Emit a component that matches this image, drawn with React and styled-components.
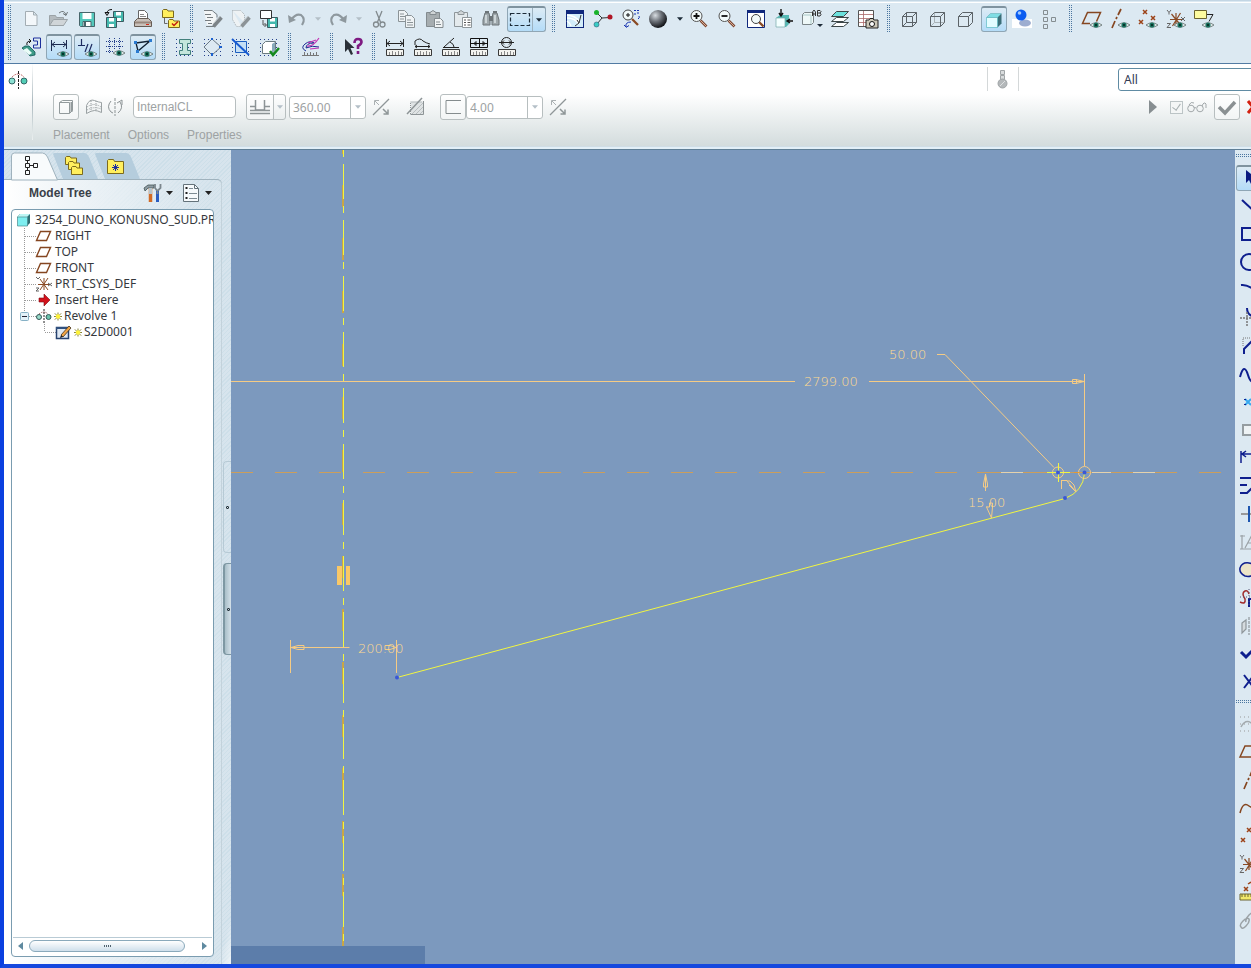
import React from 'react'
import styled, { createGlobalStyle, css } from 'styled-components'

const GlobalStyle = createGlobalStyle`
  *, *::before, *::after {
    box-sizing: border-box;
  }

  body {
    margin: 0;
    overflow: hidden;
    background: #dce9f2;
    font-family: "Liberation Sans", Arial, sans-serif;
    font-size: 12px;
    color: #222;
  }

  button, input, select {
    font: inherit;
    color: inherit;
    margin: 0;
  }
`

const treeFont = '"Noto Sans", "DejaVu Sans Condensed", sans-serif'

const Window = styled.div`
  height: 100vh;
  display: flex;
  flex-direction: column;
  overflow: hidden;
  border-left: 4px solid #0a3fe0;
  border-bottom: 4px solid #1548de;
`

const Toolbars = styled.header`
  flex: none;
  padding: 2px 0;
  border-bottom: 1px solid #527ba3;
  background: linear-gradient(#c3d6e4 0 1px, #dce9f2 1px);
`

const gripDots = css`
  background-image: conic-gradient(at 1px 1px, transparent 75%, #4b76a0 0);
  background-size: 2px 2px;
  background-origin: content-box;
  background-clip: content-box;
`

const Grip = styled.div`
  flex: none;
  width: 14px;
  height: 28px;
  padding: 0 6px 0 5px;
  ${gripDots}

  &:first-child {
    width: 13px;
    padding: 0 6px 0 4px;
  }
`

const SideGrip = styled.div`
  flex: none;
  height: 14px;
  padding: 4px 0 7px 1px;
  ${gripDots}
`

const ToolbarLine = styled.div`
  height: 28px;
  display: flex;
  align-items: center;

  &:first-child {
    height: 31px;
    padding-top: 2px;
    border-top: 1px solid #ffffff;
  }
`

const pressed = css`
  border: 1px solid #8fa6b5;
  border-top: 2px solid #7f939f;
  border-radius: 3px;
  background: linear-gradient(#dcebf5, #b4dcf8);
`

const ToolButton = styled.button`
  flex: none;
  width: 26px;
  height: 26px;
  margin: 1px;
  padding: 0;
  display: flex;
  align-items: center;
  justify-content: center;
  border: 1px solid transparent;
  background: none;
  ${({ $active }) => $active && pressed}
`

const DropButton = styled.button`
  flex: none;
  width: 13px;
  height: 26px;
  padding: 0;
  display: flex;
  align-items: center;
  justify-content: center;
  border: 0;
  background: none;
  color: ${({ disabled }) => (disabled ? '#b4bfc7' : '#1d2b38')};
`

const SplitButton = styled.div`
  flex: none;
  height: 26px;
  margin: 0 1px 0 2px;
  display: flex;
  align-items: stretch;
  ${pressed}

  ${ToolButton} {
    width: 24px;
    height: 22px;
    margin: 0;
  }

  ${DropButton} {
    width: 13px;
    height: auto;
    border-left: 1px solid #9db2c0;
  }
`

const Icon = styled.svg`
  flex: none;
  display: block;
  width: ${({ $w }) => $w || 20}px;
  height: ${({ $h }) => $h || 20}px;
  overflow: visible;
`

const Dashboard = styled.section`
  flex: none;
  height: 86px;
  display: flex;
  border-bottom: 1px solid #5f7f96;
  background: linear-gradient(#ffffff 0, #ffffff 30px, #d3dcdd 82px, #bccbd3 82px, #e2eff7 83px);
  color: #9da2a3;
`

const FeatureMark = styled.div`
  flex: none;
  width: 29px;
  height: 76px;
  padding: 6px 0 0 4px;
  border-right: 1px solid;
  border-image: linear-gradient(#ffffff, #a9b7bd 50%, #eef2f2) 1;
`

const DashboardBody = styled.div`
  flex: 1;
  min-width: 0;
  padding-left: 20px;
`

const StatusLine = styled.div`
  height: 30px;
  padding-top: 3px;
  display: flex;
  justify-content: flex-end;
`

const StatusSlot = styled.div`
  width: 32px;
  height: 24px;
  margin-right: 99px;
  display: flex;
  align-items: center;
  justify-content: center;
  border: solid #d4d8d9;
  border-width: 0 1px;
`

const Filter = styled.select`
  appearance: none;
  width: 142px;
  height: 23px;
  margin: 1px -9px 0 0;
  padding: 0 5px;
  border: 1px solid #5f8ba3;
  border-radius: 3px;
  background: #ffffff;
  color: #333b55;
  font-family: ${treeFont};
`

const ControlLine = styled.div`
  height: 26px;
  display: flex;
  align-items: center;
`

const OptionButton = styled.button`
  flex: none;
  width: 26px;
  height: 26px;
  padding: 0;
  display: flex;
  align-items: center;
  justify-content: center;
  border: 1px solid #b7bebf;
  border-radius: 3px;
  background: rgba(255, 255, 255, 0.4);
`

const PlainButton = styled(OptionButton)`
  width: ${({ $w }) => $w || 21}px;
  border-color: transparent;
  background: none;
`

const AxisInput = styled.input`
  width: 103px;
  height: 22px;
  margin: 0 10px;
  padding: 0 3px;
  border: 1px solid #b7bebf;
  border-radius: 4px;
  background: #ffffff;
`

const Split = styled.div`
  height: 26px;
  margin-right: 3px;
  display: flex;
  border: 1px solid #b7bebf;
  border-radius: 3px;

  ${OptionButton} {
    height: 24px;
    border: 0;
  }

  ${DropButton} {
    width: 12px;
    height: 24px;
    border-left: 1px solid #b7bebf;
  }
`

const Combo = styled.div`
  width: 77px;
  height: 23px;
  margin-right: 4px;
  display: flex;
  border: 1px solid #b7bebf;
  border-radius: 3px;
  background: #ffffff;

  input {
    flex: 1;
    min-width: 0;
    padding: 0 3px;
    border: 0;
    background: none;
    font-family: ${treeFont};
  }

  ${DropButton} {
    width: 15px;
    height: 21px;
    border-left: 1px solid #b7bebf;
  }
`

const Spring = styled.div`
  flex: 1;
`

const PreviewCheck = styled.label`
  width: 44px;
  margin-left: 8px;
  display: flex;
  align-items: center;
  gap: 4px;

  input {
    appearance: none;
    width: 13px;
    height: 13px;
    border: 1px solid #bcc4c6;
    background: #f4f6f6;
  }

  input:checked::after {
    content: "";
    display: block;
    width: 5px;
    height: 8px;
    margin: 0 3px;
    border: solid #a6aeb0;
    border-width: 0 1px 1px 0;
    transform: rotate(35deg);
  }
`

const SlideUps = styled.nav`
  display: flex;
  gap: 18px;
  padding-top: 6px;

  button {
    height: 18px;
    padding: 0;
    border: 0;
    background: none;
  }
`

const Workspace = styled.main`
  flex: 1;
  min-height: 0;
  display: flex;
`

const Navigator = styled.aside`
  flex: none;
  width: 227px;
  display: flex;
  background:
    linear-gradient(to bottom right, rgba(255, 255, 255, 0) 97%, rgba(255, 255, 255, 0.6)),
    repeating-linear-gradient(135deg, #cddfe9 0 1px, #d7e4ed 1px 3px);
`

const NavigatorMain = styled.div`
  flex: 1;
  min-width: 0;
  padding-top: 2px;
  display: flex;
  flex-direction: column;
`

const Tabs = styled.div`
  height: 27px;
  padding-left: 7px;
  display: flex;
`

const Tab = styled.button`
  position: relative;
  width: 42px;
  height: 27px;
  padding: 0;
  border: 0;
  background: none;

  > svg {
    position: absolute;
    inset: 0;
  }

  &:first-child {
    z-index: 1;
  }
`

const Panel = styled.div`
  flex: 1;
  min-height: 0;
  padding: 0 7px 7px;
  display: flex;
  flex-direction: column;
  border-top: 1px solid #9fb2bd;
  border-radius: 0 5px 0 0;
  background: linear-gradient(to right, #ffffff 0, #f0f5f8 60px, rgba(222, 233, 240, 0.2) 200px);
  box-shadow: inset -1px 0 0 #c3d2db;
`

const PanelHeader = styled.div`
  flex: none;
  height: 29px;
  padding: 0 3px 4px 18px;
  display: flex;
  align-items: center;

  h2 {
    flex: 1;
    margin: 0;
    font-size: 12px;
    font-weight: bold;
    color: #3a4048;
  }
`

const HeaderMenu = styled.button`
  width: 39px;
  padding: 0;
  display: flex;
  align-items: center;
  justify-content: flex-end;
  gap: 3px;
  border: 0;
  background: none;
`

const TreeBox = styled.div`
  flex: 1;
  min-height: 0;
  width: 203px;
  display: flex;
  flex-direction: column;
  border: 1px solid #7a9cb0;
  border-radius: 4px;
  background: #ffffff;
`

const TreeList = styled.ul`
  flex: 1;
  margin: 0;
  padding: 2px 0 0 4px;
  overflow: hidden;
  list-style: none;
  font-family: ${treeFont};
  font-size: 12px;
  color: #35383d;
`

const TreeRow = styled.li`
  height: 16px;
  display: flex;
  align-items: center;
  gap: ${({ $fresh }) => ($fresh ? 2 : 3)}px;
  line-height: 16px;
  white-space: nowrap;
`

const TreeGlyphs = styled.span`
  flex: none;
  display: flex;
`

const ScrollLine = styled.div`
  flex: none;
  height: 19px;
  margin: 0 1px;
  padding: 0 5px 2px;
  display: flex;
  align-items: center;
  border-top: 1px solid #b9cbd5;
`

const ScrollThumb = styled.div`
  flex: none;
  width: 156px;
  height: 12px;
  margin: 0 17px 0 6px;
  display: flex;
  align-items: center;
  justify-content: center;
  gap: 1px;
  border: 1px solid #8aa9bb;
  border-radius: 6px;
  background: linear-gradient(#ffffff, #cfdfeb);

  i {
    width: 1px;
    height: 2px;
    background: #50626e;
  }
`

const Sashes = styled.div`
  flex: none;
  width: 9px;
  padding: 311px 0 0 1px;
  display: flex;
  flex-direction: column;
  gap: 10px;
`

const Sash = styled.button`
  height: 92px;
  padding: 0;
  display: flex;
  align-items: center;
  justify-content: center;
  border: solid ${({ $open }) => ($open ? '#7e98a3' : '#b7cad5')};
  border-width: 1px 0 1px ${({ $open }) => ($open ? 2 : 1)}px;
  border-radius: 4px 0 0 4px;
  background: ${({ $open }) => ($open ? 'linear-gradient(to right, #a9bfc9, #d3e0e8)' : 'none')};

  i {
    width: 3px;
    height: 3px;
    border: 1px solid #24323a;
    border-radius: 1px;
  }
`

const Viewport = styled.section`
  flex: 1;
  min-width: 0;
  display: flex;
  flex-direction: column;
  background: #7c99be;
`

const Drawing = styled.svg`
  flex: 1;
  display: block;
  width: 100%;
  min-height: 0;

  text {
    font-family: "DejaVu Sans Light", "DejaVu Sans", sans-serif;
    font-weight: 200;
    font-size: 13px;
    fill: #ffd98f;
  }
`

const MessageStrip = styled.div`
  flex: none;
  width: 194px;
  height: 18px;
  background: #5c7daa;
`

const SketchTools = styled.aside`
  flex: none;
  width: 16px;
  overflow: hidden;
  display: flex;
  flex-direction: column;
  background: #dce9f2;
`

/* ---- icons ---- */

const Arrow = ({ w = 7 }) => (
  <Icon viewBox="0 0 7 4" $w={w} $h={4}><path d="M0 0h7L3.5 4z" fill="currentColor" /></Icon>
)

const eye = (
  <g>
    <path d="M8 16q6-4.500 12 0q-6 4.500-12 0z" fill="#e8f0f0" stroke="#4d5c5a" strokeWidth=".7" />
    <circle cx="14" cy="16" r="2.600" fill="#1d7563" />
    <circle cx="14" cy="16" r="1.200" fill="#06352c" />
  </g>
)

const dots = (
  <path d="M1.5 2v17M5.5 2v17M9.5 2v17M13.5 2v17M17.5 2v17" stroke="#24408c" strokeDasharray="1 3" />
)

const ruler = (
  <g>
    <path d="M1.5 12.5h17v6h-17z" fill="#f4f4f0" stroke="#3a3a3a" />
    <path d="M4.5 15v3M7.5 14v4M10.5 15v3M13.5 14v4M16.5 15v3" stroke="#888" />
  </g>
)

const floppy = (
  <g>
    <path d="M2.5 3.5h15v14h-14l-1-1z" fill="#54c8bc" stroke="#47656a" />
    <path d="M5.5 4h9v6h-9z" fill="#fff" />
    <path d="M6 12.500h8v5h-8z" fill="#fff" stroke="#47656a" />
    <path d="M7 13h2v4h-2z" fill="#47656a" />
  </g>
)

const miniFloppy = (x, y) => (
  <g transform={`translate(${x} ${y})`}>
    <path d="M.5.5h10v10h-10z" fill="#45b9ae" stroke="#3b5a60" />
    <path d="M3 1h5v3.500h-5zM3 7h5v3h-5z" fill="#fff" />
  </g>
)

const magnifier = (sign) => (
  <g fill="none">
    <path d="M10.500 11.500l6 6" stroke="#7d4a34" strokeWidth="2.600" />
    <path d="M10.500 11.500l6 6" stroke="#d8ac96" />
    <circle cx="6.500" cy="7" r="5.500" fill="#f2fafa" stroke="#555" />
    <path d={sign} stroke="#111" strokeWidth="1.800" />
  </g>
)

const wire = 'M2.5 7.5h10v10h-10zM6.500 3.500h10v10M2.5 7.5l4-4M12.5 7.5l4-4M12.5 17.5l4-4'

const cross = (x, y, s = 2) => `M${x - s} ${y - s}l${2 * s} ${2 * s}M${x + s} ${y - s}l${-2 * s} ${2 * s}`

const csys = (
  <g fill="none">
    <path d="M4 10.500h12M5.500 5l9 11M14.500 4l-8 13M10 4v12" stroke="#8a4a24" strokeWidth="1.200" />
    <path d="M1 1l2 2.500l2-2.500M3 3.500v2M1 14.500h3.500l-3.500 4h4M15 8l4 4M19 8l-4 4" stroke="#666" strokeWidth="1" />
  </g>
)

const folder = (x, y) => (
  <path transform={`translate(${x} ${y})`} d="M.5 8.500v-7l1-1h3.500l1 1.500h5.500v6.500z" fill="#ffef5e" stroke="#7c6a1c" />
)

const icons = {
  new: <path d="M4.5 2.500h8l3.500 3.500v10.500h-11.500zM12.500 2.500v3.500h3.500" fill="#f3f7fa" stroke="#a3adb3" />,
  open: (
    <g>
      <path d="M.5 16.500v-10h6l1 2h7v8z" fill="#b4bbbf" stroke="#9ba3a7" />
      <path d="M.5 16.500l4-6h14l-4 6z" fill="#d0d5d8" stroke="#9ba3a7" />
      <path d="M10 4q5-4 7 2M14 4.500l3 2l1.500-3.500" fill="none" stroke="#6d7578" />
    </g>
  ),
  save: floppy,
  saveCopy: (
    <g>
      {miniFloppy(8, 2)}
      {miniFloppy(1, 8)}
      <path d="M7 .5q-5 0-5 4M0 3.500h4l-2 3z" stroke="#111" fill="none" />
    </g>
  ),
  print: (
    <g>
      <path d="M5.500 10v-8.500h6l3 3v6" fill="#fff" stroke="#666" />
      <path d="M7 5.500h4M7 7.500h6M7 9.500h6" stroke="#888" />
      <path d="M1.500 12.500l3-3h11l3 3v5h-17z" fill="#c9c1ba" stroke="#655b53" />
      <path d="M2 12.500h16v2h-16z" fill="#98877c" />
      <path d="M13 15.500h3" stroke="#d62c1a" />
    </g>
  ),
  confirm: (
    <g>
      {folder(1, 0)}
      {folder(7, 10)}
      <path d="M3.500 9v5.500h3" fill="none" stroke="#666" />
      <path d="M11 14.500l2 2l4-4" fill="none" stroke="#c21d10" strokeWidth="1.500" />
    </g>
  ),
  regen: (
    <g>
      <path d="M1 1.500h8l5 4v3M3 17.500h8" fill="none" stroke="#777e82" />
      <path d="M1 2h8l4 4v10h-9z" fill="#f3f6f7" />
      <path d="M2 5.500h6M4 8.500h6M2 11.500h6M5 14.500h4" stroke="#777e82" />
      <path d="M10.500 17.500l8-9" stroke="#7d8488" strokeWidth="3.500" />
      <path d="M10 15l7-8" stroke="#b9c0c3" />
    </g>
  ),
  regenAuto: (
    <g>
      <path d="M1.500 1.500h8l4 4v8M1.500 1.500v9l4 7h5" fill="#eef2f4" stroke="#a5adb1" strokeDasharray="1 1" />
      <path d="M10.500 17.500l8-9" stroke="#8c9397" strokeWidth="3.500" />
      <path d="M10 15l7-8" stroke="#c5cbce" />
    </g>
  ),
  saveWindow: (
    <g>
      {miniFloppy(8, 8)}
      <path d="M1.500 1.500h11v8h-11z" fill="#fff" stroke="#333" />
      <path d="M4 11v5h3M5.500 14l2 2l-2 2" fill="none" stroke="#555" />
    </g>
  ),
  undo: (
    <g>
      <path d="M4 11q5-7 10-5q5 4 1 10" fill="none" stroke="#8e989e" strokeWidth="2.200" />
      <path d="M1 6l1 8l7-3z" fill="#8e989e" />
    </g>
  ),
  redo: (
    <g>
      <path d="M16 11q-5-7-10-5q-5 4-1 10" fill="none" stroke="#8e989e" strokeWidth="2.200" />
      <path d="M19 6l-1 8l-7-3z" fill="#8e989e" />
    </g>
  ),
  cut: (
    <g fill="none" stroke="#828a8e" strokeWidth="1.300">
      <path d="M7 2l4.500 11M13 2l-4.500 11" />
      <circle cx="7" cy="15.500" r="2.500" />
      <circle cx="13.500" cy="15.500" r="2.500" />
    </g>
  ),
  copy: (
    <g fill="#eff3f5" stroke="#8b9397">
      <path d="M1.500 1.500h6l3 3v8h-9zM3 5h4M3 7.500h5M3 10h4" />
      <path d="M8.500 6.500h6l3 3v9h-9zM10 11h4M10 13.500h6M10 16h6" />
    </g>
  ),
  paste: (
    <g>
      <path d="M1.500 3.500h13v14h-13z" fill="#a6adb0" stroke="#838b8f" />
      <path d="M5 5.500v-2l3-2l3 2v2z" fill="#d0d5d7" stroke="#838b8f" />
      <path d="M9.500 9.500h6l2.500 2.500v6.500h-8.500zM11 13h4M11 15.500h5" fill="#f1f4f5" stroke="#838b8f" />
    </g>
  ),
  pasteSpecial: (
    <g stroke="#8e969a">
      <path d="M1.500 3.500h13v14h-13z" fill="#e4eaed" />
      <path d="M5 5.500v-2l3-2l3 2v2z" fill="#d0d5d7" />
      <path d="M9.500 8.500h9v10h-9z" fill="#fff" />
      <path d="M11 11h2M14.500 11h3M11 13.500h2M14.500 13.500h3M11 16h2M14.500 16h3" stroke="#555" />
    </g>
  ),
  find: (
    <g>
      <path d="M4 4h4l1 5v7h-7v-5zM12 4h4l2 7v5h-7v-7z" fill="#9fa8ac" stroke="#6c7478" />
      <path d="M4 3h4M12 3h4" stroke="#6c7478" strokeWidth="2" />
      <path d="M8 7h4v5h-4z" fill="#6c7478" />
      <path d="M5 6v8M14 6v8" stroke="#dde3e6" strokeWidth="1.500" />
    </g>
  ),
  select: <path d="M.5 4.500h19v12h-19z" fill="none" stroke="#1c2b38" strokeWidth="1.200" strokeDasharray="4 2" />,
  repaint: (
    <g>
      <path d="M1 1h18v18h-18z" fill="#10287c" />
      <path d="M2 5h16v13h-16z" fill="#d3edfa" />
      <path d="M2 9q8 0 12 6M2 6q9 1 12 6M6 17q-1-3-4-5" stroke="#fff" strokeWidth="1.500" fill="none" />
      <path d="M10 17l4-3l2-8M14 14l-2-3" stroke="#333" fill="none" />
    </g>
  ),
  spin: (
    <g>
      <path d="M4 4l5 5l8-.5M9 9l-5 6" stroke="#333" fill="none" />
      <circle cx="3.500" cy="3.500" r="2.500" fill="#19b32a" />
      <circle cx="17" cy="8" r="2.500" fill="#b01626" />
      <circle cx="3.500" cy="15.500" r="2.500" fill="#3accc4" stroke="#246" strokeWidth=".5" />
    </g>
  ),
  orient: (
    <g fill="none">
      <circle cx="7" cy="6" r="5" fill="#f2fafa" stroke="#444" />
      <path d="M5 6h4M7 4v4" stroke="#111" />
      <path d="M11 10l6 6" stroke="#8a4a24" strokeWidth="2.300" />
      <path d="M13 1.500h2M16 1.500h2M13 5h2M16 4h2M10 13q-6 0-5 5l-2-2M5 18.500l3-2M17 10q2-1 1-3" stroke="#1733b0" />
    </g>
  ),
  shade: (
    <g>
      <radialGradient id="ball" cx="35%" cy="30%" r="70%">
        <stop offset="0" stopColor="#d8dde2" />
        <stop offset=".5" stopColor="#6b7077" />
        <stop offset="1" stopColor="#14161a" />
      </radialGradient>
      <circle cx="9" cy="10" r="9" fill="url(#ball)" />
    </g>
  ),
  zoomIn: magnifier('M3.500 7h6M6.500 4v6'),
  zoomOut: magnifier('M3.500 7h6'),
  refit: (
    <g>
      <path d="M1.500 1.500h17v17h-17z" fill="#fff" stroke="#10287c" />
      <path d="M1 1h18v3h-18z" fill="#10287c" />
      <path d="M13 13l4.500 4.500" stroke="#8a4a24" strokeWidth="2.300" />
      <circle cx="10" cy="10" r="4.500" fill="#f2fafa" stroke="#444" />
    </g>
  ),
  view: (
    <g>
      <path d="M2 9l4-3h9v9l-3 3h-10z" fill="#55b9b4" />
      <path d="M2 9h9v9h-9z" fill="#f3ffff" stroke="#7aa" strokeWidth=".7" />
      <path d="M7 0v6M5 4l2 3l2-3M19 12h-5M16 10l-3 2l3 2" fill="none" stroke="#111" strokeWidth="1.400" />
    </g>
  ),
  savedViews: (
    <g>
      <path d="M.5 5.500l2-2h9v10l-2 2h-9z" fill="#eef8f8" stroke="#7b8588" />
      <path d="M1 6h8v9" fill="none" stroke="#a9c8c8" />
      <path d="M10.500 7v-4l1.500-2l1.500 2v4M10.500 5h3M15.500 1.500h2.500l1 1l-1 1.500h-2.500M18 4l1 1.500l-1 1.500h-2.500v-5.500" fill="none" stroke="#333" />
      <path d="M15 15h6l-3 3z" fill="#1d2b38" />
    </g>
  ),
  layers: (
    <g stroke="#3c4648">
      <path d="M1.500 17.500l5-4h12l-5 4z" fill="#fff" />
      <path d="M1.500 12.500l5-4h12l-5 4z" fill="#fff" />
      <path d="M1.500 7.500l5-5h12l-5 5z" fill="#6be0dc" />
    </g>
  ),
  snapshot: (
    <g>
      <path d="M.5 1.500h15v16h-15z" fill="#fff" stroke="#555" />
      <path d="M1 5.500h14M1 9.500h14M1 13.500h14M5.500 2v15" stroke="#a66" strokeWidth=".8" />
      <path d="M8 11h3l1-1.500h3l1 1.500h4v8h-12z" fill="#cbc6b7" stroke="#222" />
      <circle cx="14" cy="15" r="2.500" fill="#fff" stroke="#111" />
    </g>
  ),
  wireframe: <path d={`${wire}M6.500 3.500v10h10M2.5 17.5l4-4`} fill="none" stroke="#5c6368" />,
  hiddenLine: (
    <g fill="none">
      <path d="M6.500 3.500v10h10M2.500 17.500l4-4" stroke="#a9b2b7" />
      <path d={wire} stroke="#5c6368" />
    </g>
  ),
  noHidden: (
    <path d="M2.500 7.500h10v10h-10zM2.500 7.500l4-4h10v10l-4 4M12.500 7.500l4-4" fill="none" stroke="#5c6368" />
  ),
  shaded: (
    <g>
      <path d="M2.500 7.500l4-4h11v10l-4 4z" fill="#3a6e78" />
      <path d="M2.500 7.500l4-4h11l-4 4z" fill="#7fdde4" />
      <path d="M2.500 7.500h11v10h-11z" fill="#e2fcff" stroke="#5dbac4" strokeWidth=".7" />
    </g>
  ),
  realism: (
    <g>
      <path d="M0 10h20v9h-20z" fill="#fff" />
      <ellipse cx="13" cy="14" rx="6" ry="3.500" fill="#9dadd0" />
      <circle cx="9" cy="6" r="5.500" fill="#0b5cf0" />
      <circle cx="7.500" cy="4" r="1.800" fill="#9dc6ff" />
    </g>
  ),
  modelTree: (
    <path d="M3.500 1.500h4v4h-4zM3.500 8.500h4v4h-4zM3.500 15.500h4v4h-4zM11.500 8.500h4v4h-4z" fill="none" stroke="#858d91" />
  ),
  planes: <g><path d="M8 14.500h-7.500l5-11h13l-4 9" fill="none" stroke="#854620" strokeWidth="1.500" />{eye}</g>,
  axes: <g><path d="M11 0l-3 6M7 8l-1 2M5 12l-3 7" fill="none" stroke="#854620" strokeWidth="1.700" />{eye}</g>,
  points: <g><path d={`${cross(7, 3)}${cross(15, 9)}${cross(3, 13)}`} stroke="#9c4218" strokeWidth="1.500" />{eye}</g>,
  csysShow: <g>{csys}{eye}</g>,
  notes: (
    <g>
      <path d="M.5 1.500h12v8h-12z" fill="#fdfca0" stroke="#6b6430" />
      <path d="M13 5.500h6l-4 7" fill="none" stroke="#222" />
      {eye}
    </g>
  ),
  sketchView: (
    <g fill="none">
      <path d="M12.500 3v-2h7v10h-7v-3h4v-4h-4z" stroke="#1c2f9c" />
      <path d="M6 8q-1-4 4-4M8 2l2 2l-2 2" stroke="#111" />
      <path d="M1 11l3-2h4l6 6v3l-5 1z" fill="#3f9c88" stroke="#155" strokeWidth=".8" />
      <path d="M2 13l4-2l5 5l-3 2z" fill="#eafcf8" />
    </g>
  ),
  dimShow: <g><path d="M2.5 2v11M17.5 2v9M3 6.500h14M6 4l-3 2.500l3 2.500M14 4l3 2.500l-3 2.500" fill="none" stroke="#1d2b50" />{eye}</g>,
  constraintShow: <g><path d="M1 7.500h7M4.500 1v6M11 6l-3 8M15 6l-3 8" fill="none" stroke="#1d2b60" strokeWidth="1.200" />{eye}</g>,
  gridShow: <g><path d="M4.500 1v16M9.500 1v12M14.500 1v12M1 4.500h18M1 9.500h18M1 14.500h8" fill="none" stroke="#24408c" strokeDasharray="1 1" />{eye}</g>,
  vertexShow: (
    <g>
      <path d="M3 5l14-2l-12 10z" fill="none" stroke="#123" strokeWidth="1.300" />
      <path d="M1 3h3v3h-3zM16 1h3v3h-3zM3 12h3v3h-3z" fill="#2a7ad0" />
      {eye}
    </g>
  ),
  section: <g>{dots}<path d="M4.500 2.500h11v4h-3v7h3v4h-11v-4h3v-7h-3z" fill="#c4e6dc" stroke="#43807c" /></g>,
  rotateSection: (
    <g>
      {dots}
      <path d="M9 2l9 8l-9 8l-8-8z" fill="#dce9f2" stroke="#6a7884" />
      <path d="M8 1h2v2h-2zM16 9h3v2h-3zM8 16h2v3h-2z" fill="#1c62d0" />
    </g>
  ),
  shadeLoops: <g>{dots}<path d="M4.500 4.500h11v11h-11z" fill="#c5dff4" stroke="#1d5fc0" /><path d="M1 2l17 16" stroke="#1559d0" strokeWidth="1.800" /></g>,
  feasible: (
    <g>
      {dots}
      <path d="M3.500 7.500l3-3h10v8l-3 4h-10z" fill="#fff" stroke="#6b7b80" />
      <path d="M13 7v9l3-3v-8z" fill="#8ab" />
      <path d="M11 14l3 4l6-7" fill="none" stroke="#138a1f" strokeWidth="2.500" />
    </g>
  ),
  curvature: (
    <g fill="none">
      <path d="M5 14q-6-3-1-7q5-4 9-1q-8 0-8 5q6-3 13-1" stroke="#1b2c90" />
      <path d="M6 9q6 1 12-8M9 12l9-1M7 6l8-3" stroke="#c332b4" strokeWidth="1.200" />
      <path d="M1 18.500h17M3.500 15v3M6.500 16v2M9.500 15v3M12.500 16v2M15.500 15v3" stroke="#777" />
    </g>
  ),
  help: (
    <g>
      <path d="M2 2v13l3-3l3 6l2-1l-2.500-6h4z" fill="#2a3038" />
      <path d="M11.500 6q0-4 3.500-4t3.500 3q0 2-3.500 4v3M15 14v3" fill="none" stroke="#7e1a82" strokeWidth="2.600" />
    </g>
  ),
  distance: <g>{ruler}<path d="M1.500 2v8M18.500 2v8M2 6.500h16M5 4l-3 2.500l3 2.500M15 4l3 2.500l-3 2.500" fill="none" stroke="#222" /></g>,
  length: <g>{ruler}<path d="M2 4q5-4 8 0q3 2 7 3M2 4v4M2 9.500h15M4 8l-2 1.500l2 1.500M15 8l2 1.500l-2 1.500" fill="none" stroke="#222" /></g>,
  angle: <g>{ruler}<path d="M2 10.500h16M3 10l10-9M9 5q4 2 4 5" fill="none" stroke="#222" /></g>,
  area: <g>{ruler}<path d="M1.500 1.500h17v9h-17zM2 6.500h16M10.500 1v9M5 6.500l2-2v4zM16 6.500l-2-2v4z" fill="none" stroke="#111" /></g>,
  diameter: <g>{ruler}<circle cx="9.500" cy="5.500" r="5" fill="none" stroke="#222" /><path d="M2 5.500h15M7 3.500l-2 2l2 2M12 3.500l2 2l-2 2" fill="none" stroke="#222" /></g>
}

const sideIcons = {
  pointer: <path d="M7 1v13l3-3l3 6l3-1l-3-6h5z" fill="#0a1a80" stroke="none" />,
  line: <path d="M3 4l14 13" />,
  rectangle: <path d="M3 4h16v12h-16z" />,
  circle: <circle cx="10" cy="10" r="8" />,
  arc: <path d="M2 5q8-1 16 8" />,
  fillet: <g><path d="M8 0q0 8 9 9" /><path d="M1 10h17M8 4v14" stroke="#777" strokeDasharray="2 1" strokeWidth="1.500" /></g>,
  chamfer: <g><path d="M5 18v-5l9-9h5" /><path d="M4 10v-8h8" stroke="#777" strokeDasharray="1 1" strokeWidth="1" /></g>,
  spline: <path d="M1 13q4-15 8-2t9 0" />,
  point: <g><path d={cross(9, 10, 3)} stroke="#37a8ee" /><path d="M6 7v1M6 12v1" stroke="#0f1f8e" /></g>,
  edge: <path d="M4 5h15v10h-15z" stroke="#959da1" fill="#eef3f5" />,
  dimension: <path d="M2 3v12M3 6h15M7 3l-4 3l4 3" strokeWidth="1.500" />,
  modify: <path d="M1 2h17M1 9h7M1 17h7l7-7" />,
  constrain: <g><path d="M2 10h17" stroke="#999" /><path d="M10 2v16" stroke="#1d55b0" /></g>,
  text: <path d="M3 3v14M1 4h5M1 17h15M6 16l7-13l3 13M9 11h7" stroke="#9aa1a5" strokeWidth="1.200" />,
  palette: <path d="M1 8q2-6 9-5q8 1 7 8q-4 7-11 5q-6-3-5-8z" fill="#ece4c8" strokeWidth="1.500" />,
  trim: <g><path d="M1 14q6 3 5-3q-4-6 0-8q3-1 4 3" stroke="#a02a2a" strokeWidth="1.500" /><path d="M10 19v-8h7" /><path d="M1 9h17M10 1v16" stroke="#557" strokeDasharray="1 2" strokeWidth="1" /></g>,
  mirror: <g stroke="#8f979b" strokeWidth="1.200"><path d="M3 7l4-3v9l-4 4z" fill="#d4dadd" /><path d="M10 1v18" strokeDasharray="3 1" /></g>,
  done: <path d="M2 8l5 5l8-8" strokeWidth="3" />,
  quit: <path d="M5 3l10 13M15 3l-10 13" />,
  sketchCurve: <g><path d="M1 3h18M1 10h18M1 17h18" stroke="#999" strokeDasharray="1 3" strokeWidth="1" /><path d="M2 13q6-11 14 0" stroke="#a2a9ad" strokeWidth="1.500" /></g>,
  plane: <path d="M1 15l5-11h14l-5 11z" stroke="#854620" strokeWidth="1.500" />,
  axis: <path d="M13 1l-2 5M10 8l-1 2M8 12l-3 7" stroke="#854620" strokeWidth="1.700" />,
  curve: <path d="M1 15q3-12 9-7q5 4 9-3" stroke="#854620" strokeWidth="1.500" />,
  pointSet: <path d={`${cross(10, 4)}${cross(4, 14)}${cross(16, 13)}`} stroke="#9c4218" strokeWidth="1.500" />,
  csys,
  analysis: <g><path d="M1 12h18v6h-18z" fill="#f2e96a" stroke="#6b6430" strokeWidth="1" /><path d="M3 12v3M6 12v3M9 12v3M12 12v3" stroke="#6b6430" strokeWidth="1" /><path d={`${cross(7, 7)}M9 2l3-2`} stroke="#9c4218" strokeWidth="1.500" /></g>,
  reference: <g stroke="#9ba2a6" strokeWidth="1.500"><path d="M2 17q-2-2 2-6t6-2q1 3-3 7t-5 1zM7 12q-1-3 3-7t8-3" /></g>
}

const partIcon = (
  <g><path d="M1 5l3-3h10v9l-3 3z" fill="#2f6f74" /><path d="M1 5l3-3h10l-3 3z" fill="#bdf6f4" /><path d="M1.500 5h10v9h-10z" fill="#7eeef0" stroke="#4a8a8e" strokeWidth=".7" /></g>
)
const planeIcon = <path d="M.5 12.500l4-9h10l-4 9z" fill="none" stroke="#854620" strokeWidth="1.400" />
const treeCsysIcon = (
  <g fill="none"><path d="M2 8.500h12M4 3l8 11M12 2l-8 12M8 2v12" stroke="#8a4a24" /><path d="M0 1l2 2l2-2M0 12h3l-3 3h3M12 7l4 3M16 7l-4 3" stroke="#666" /></g>
)
const insertIcon = <path d="M3 6h5v-4l6 6l-6 6v-4h-5z" fill="#d3121c" stroke="#7c0b10" strokeWidth=".6" />
const revolveIcon = (
  <g fill="none">
    <circle cx="3" cy="9" r="2.500" fill="#9adccb" stroke="#355" />
    <circle cx="12.500" cy="9" r="2.500" fill="#6bc2ab" stroke="#355" />
    <path d="M8 1v15" stroke="#222" strokeDasharray="2 1" />
    <path d="M3 6q5-4 9 0" stroke="#844" strokeDasharray="1 1" />
  </g>
)
const sketchIcon = (
  <g><path d="M.5 3.500h12v11h-12z" fill="#dfe9f4" stroke="#26426f" strokeWidth="1.500" /><path d="M0 3h13v2h-13z" fill="#31517f" /><path d="M5 11l8-9l2 2l-8 9z" fill="#f2a544" stroke="#40301a" strokeWidth=".8" /><path d="M5 11l2 2l-3 1z" fill="#222" /></g>
)

/* ---- data ---- */

const mainTools = [
  'grip', 'new', 'open', 'save', 'saveCopy', 'print', 'confirm',
  'grip', 'regen', 'regenAuto', 'saveWindow', 'undo', 'dropOff', 'redo', 'dropOff',
  'cut', 'copy', 'paste', 'pasteSpecial', 'find', 'split',
  'grip', 'repaint', 'spin', 'orient', 'shade', 'drop', 'zoomIn', 'zoomOut', 'refit', 'view', 'savedViews', 'layers', 'snapshot',
  'grip', 'wireframe', 'hiddenLine', 'noHidden', 'shaded', 'realism', 'modelTree',
  'grip', 'planes', 'axes', 'points', 'csysShow', 'notes'
]

const sketchTools = [
  'grip', 'sketchView', 'dimShow', 'constraintShow', 'gridShow', 'vertexShow',
  'grip', 'section', 'rotateSection', 'shadeLoops', 'feasible',
  'grip', 'curvature', 'grip', 'help',
  'grip', 'distance', 'length', 'angle', 'area', 'diameter'
]

const activeTools = ['shaded', 'dimShow', 'constraintShow', 'vertexShow', 'pointer']

const sideTools = [
  'grip', 'pointer', 'line', 'rectangle', 'circle', 'arc', 'fillet', 'chamfer', 'spline', 'point', 'edge',
  'dimension', 'modify', 'constrain', 'text', 'palette', 'trim', 'mirror', 'done', 'quit',
  'grip', 'sketchCurve', 'plane', 'axis', 'curve', 'pointSet', 'csys', 'analysis', 'reference'
]

const treeNodes = [
  { name: '3254_DUNO_KONUSNO_SUD.PRT', icon: partIcon },
  { name: 'RIGHT', icon: planeIcon, depth: 1 },
  { name: 'TOP', icon: planeIcon, depth: 1 },
  { name: 'FRONT', icon: planeIcon, depth: 1 },
  { name: 'PRT_CSYS_DEF', icon: treeCsysIcon, depth: 1 },
  { name: 'Insert Here', icon: insertIcon, depth: 1 },
  { name: 'Revolve 1', icon: revolveIcon, depth: 1, open: true, fresh: true },
  { name: 'S2D0001', icon: sketchIcon, depth: 2, fresh: true }
]

/* ---- parts ---- */

const Toolbar = ({ items }) => (
  <ToolbarLine>
    {items.map((item, i) => {
      if (item === 'grip') return <Grip key={i} />
      if (item === 'drop' || item === 'dropOff') {
        return <DropButton key={i} aria-label="More" disabled={item === 'dropOff'}><Arrow w={6} /></DropButton>
      }
      if (item === 'split') {
        return (
          <SplitButton key={i}>
            <ToolButton aria-label="select"><Icon viewBox="0 0 20 20">{icons.select}</Icon></ToolButton>
            <DropButton aria-label="Select options"><Arrow w={6} /></DropButton>
          </SplitButton>
        )
      }
      return (
        <ToolButton key={i} aria-label={item} $active={activeTools.includes(item)}>
          <Icon viewBox="0 0 20 20">{icons[item]}</Icon>
        </ToolButton>
      )
    })}
  </ToolbarLine>
)

const FlipIcon = () => (
  <Icon viewBox="0 0 20 20" fill="none" stroke="#8f9698">
    <path d="M2 18l16-16" strokeWidth="1.300" />
    <path d="M3.500 8v-4.500h4.500M4 4l4 4" stroke="#abb1b3" />
    <path d="M17 12.500v4.500h-4.500M12 12l5 5" strokeWidth="1.500" />
  </Icon>
)

const Star = () => (
  <Icon viewBox="0 0 9 9" $w={8} $h={9}>
    <path d="M4.500 0v9M0 4.500h9M1 1l7 7M8 1l-7 7" stroke="#77721c" />
    <circle cx="4.500" cy="4.500" r="2.500" fill="#fff33a" />
  </Icon>
)

const Guide = ({ open, half }) => (
  <Icon viewBox="0 0 20 16" $w={20} $h={16} fill="none">
    <path d={half ? 'M8.500 0v8' : 'M8.500 0v16'} stroke="#9a9a9a" strokeDasharray="1 1" />
    <path d="M9 8.500h11" stroke="#9a9a9a" strokeDasharray="1 1" />
    {open && (
      <g>
        <rect x="4.500" y="4.500" width="8" height="8" rx="1" fill="#e3f1f8" stroke="#86b1c6" />
        <path d="M6 8.500h5" stroke="#223" />
      </g>
    )}
  </Icon>
)

const ModelTree = () => (
  <TreeList>
    {treeNodes.map(({ name, icon, depth = 0, open, fresh }) => (
      <TreeRow key={name} $fresh={fresh}>
        <TreeGlyphs>
          {depth === 2 && <Icon viewBox="0 0 20 16" $w={20} $h={16} />}
          {depth > 0 && <Guide open={open} half={open || depth === 2} />}
          <Icon viewBox="0 0 16 16" $w={16} $h={16}>{icon}</Icon>
        </TreeGlyphs>
        {fresh && <Star />}
        <span>{name}</span>
      </TreeRow>
    ))}
  </TreeList>
)

const Sketch = () => (
  <Drawing role="img" aria-label="Sketch">
    <g transform="translate(-231 -150)" fill="none" stroke="#f5cb84">
      {/* references */}
      <path d="M231 472.500h1004" stroke="#cb9e5c" strokeDasharray="22 22" />
      <path d="M977 472.500h199" stroke="#cb9e5c" />
      <path d="M1001 472.500h22M1092 472.500h19M1133 472.500h22" stroke="#e5d2ac" />
      <path d="M343 150v796" stroke="#c9a545" strokeWidth="2" strokeDasharray="22 31" strokeDashoffset="18" />
      <path d="M343.500 150v796" stroke="#f2f640" strokeDasharray="35 7 7 7" strokeDashoffset="42" />

      {/* dimensions */}
      <path d="M231 381.500h564M869 381.500h215M1084.500 374v92" />
      <path d="M1072.500 379.500h4v4h-4zM1076 379.500l8 2l-8 2" />
      <path d="M937 354.500h8l109 113" />
      <path d="M290.500 640v33M290.500 647.500h59M396.500 640v33M291 647.500l7-2h6v4h-6zM396 647.500l-6-2h-5v4h5z" />

      <path d="M397 677.500l668-179q18-7 19.500-25" stroke="#f2f640" />
      <path d="M337 566h5v19h-5zM346 566h4v19h-4z" fill="#fac867" stroke="none" />

      <path d="M985.500 474l-2 10v3h4v-3zM985.500 474v17M991.500 518l-5-11h3v-4h3v4z" />
      <path d="M1061 480.500h6M1061.500 480v9M1067 481l9 11l-2-7l-4-4zM1069 485l7 7" />
      <circle cx="1058" cy="472.500" r="5.500" />
      <circle cx="1084.500" cy="472.500" r="6" />
      <path d="M1047 472.500h23M1058.500 463v19" stroke="#f2f640" />
      <path d="M1074 472.500h6" stroke="#e59a33" />
      <g fill="#3a58d6" stroke="none">
        <circle cx="1058" cy="472.500" r="2" />
        <circle cx="1084.500" cy="472.500" r="2" />
        <circle cx="1065" cy="498" r="2" />
        <circle cx="397" cy="677.500" r="2" />
      </g>
      <g stroke="none">
        <text x="889" y="359">50.00</text>
        <text x="804" y="386">2799.00</text>
        <text x="968" y="507">15.00</text>
        <text x="358" y="653">200.00</text>
      </g>
    </g>
  </Drawing>
)

const App = () => {
  return (
    <>
      <GlobalStyle />
      <Window>
        <Toolbars>
          <Toolbar items={mainTools} />
          <Toolbar items={sketchTools} />
        </Toolbars>

        <Dashboard>
          <FeatureMark>
            <Icon viewBox="0 0 20 20" fill="none">
              <circle cx="4" cy="11" r="3" fill="#8ce0d2" stroke="#366" />
              <circle cx="16" cy="11" r="3" fill="#52cdb5" stroke="#366" />
              <path d="M10.500 1v18" stroke="#222" strokeDasharray="3 1" />
              <path d="M4 7q6-6 12 0" stroke="#a33" strokeDasharray="1 1" />
            </Icon>
          </FeatureMark>
          <DashboardBody>
            <StatusLine>
              <StatusSlot>
                <Icon viewBox="0 0 20 20" fill="#d9dcdd" stroke="#a0a5a7">
                  <path d="M7.500 1.500h4v4h-4zM7.500 6.500h4v4h-4z" />
                  <circle cx="9.500" cy="14.500" r="4.500" fill="#b4b8ba" />
                  <path d="M7 17l5-5" stroke="#dfe2e3" />
                </Icon>
              </StatusSlot>
              <Filter aria-label="Selection filter" defaultValue="All">
                <option>All</option>
              </Filter>
            </StatusLine>
            <ControlLine>
              <OptionButton aria-label="Solid">
                <Icon viewBox="0 0 20 20" fill="none" stroke="#929a9c">
                  <path d="M3.500 5.500h10v11h-10z" />
                  <path d="M3.500 5.500l3-2h10v10l-3 3" />
                  <path d="M15.500 5v10" strokeWidth="2" />
                </Icon>
              </OptionButton>
              <PlainButton $w={30} aria-label="Surface">
                <Icon viewBox="0 0 20 20" fill="none" stroke="#9aa1a3">
                  <path d="M2.500 16.500v-8q3-7 8-5t7 2v10q-4-2-7-2t-8 3z" />
                  <path d="M3 10q7-5 14 0M3 13q7-4 14-1M7 4v10M12 4v10" strokeDasharray="1 1" />
                </Icon>
              </PlainButton>
              <PlainButton $w={14} aria-label="Axis">
                <Icon viewBox="0 0 20 20" fill="none" stroke="#8d9496">
                  <path d="M9 1v18" strokeDasharray="3 1" />
                  <path d="M5 4q-5 6 0 11l2 1M12 16q6-5 2-11M11 6l5-3v5" />
                </Icon>
              </PlainButton>
              <AxisInput aria-label="Axis of revolution" defaultValue="InternalCL" />
              <Split>
                <OptionButton aria-label="Angle type">
                  <Icon viewBox="0 0 20 20" fill="none" stroke="#8d9496">
                    <path d="M5.500 3v10h9v-10" strokeWidth="1.500" />
                    <path d="M0 9.500h5M15 9.500h5M0 13.500h20M0 16.500h20" strokeWidth="1.300" />
                  </Icon>
                </OptionButton>
                <DropButton disabled aria-label="Angle options"><Arrow w={6} /></DropButton>
              </Split>
              <Combo>
                <input aria-label="Angle" defaultValue="360.00" />
                <DropButton disabled aria-label="Recent angles"><Arrow w={6} /></DropButton>
              </Combo>
              <PlainButton aria-label="Flip angle"><FlipIcon /></PlainButton>
              <PlainButton $w={49} aria-label="Remove material">
                <Icon viewBox="0 0 20 20" fill="none" stroke="#8d9496">
                  <path d="M5 4.500h12v13h-12z" fill="#dfe3e4" stroke="none" />
                  <path d="M17.500 4v13.500h-13" />
                  <path d="M4.500 17v-12h12" strokeDasharray="1 1" />
                  <path d="M6 17l11-11M10 17l7-7M14 17l3-3" stroke="#b8bec0" />
                  <path d="M1 17l15-16" strokeWidth="1.500" />
                </Icon>
              </PlainButton>
              <OptionButton aria-label="Thicken">
                <Icon viewBox="0 0 20 20"><path d="M18 3.500h-15v13h15" fill="none" stroke="#858c8e" /></Icon>
              </OptionButton>
              <Combo>
                <input aria-label="Thickness" defaultValue="4.00" />
                <DropButton disabled aria-label="Recent thicknesses"><Arrow w={6} /></DropButton>
              </Combo>
              <PlainButton aria-label="Flip thickness"><FlipIcon /></PlainButton>
              <Spring />
              <PlainButton $w={18} aria-label="Resume">
                <Icon viewBox="0 0 8 14" $w={8} $h={14}><path d="M0 0l8 7l-8 7z" fill="#878e91" /></Icon>
              </PlainButton>
              <PreviewCheck>
                <input type="checkbox" defaultChecked aria-label="Preview" />
                <Icon viewBox="0 0 20 12" $h={12} fill="none" stroke="#a2a8aa">
                  <circle cx="4" cy="7.500" r="3.300" />
                  <circle cx="13" cy="7.500" r="3.300" />
                  <path d="M2 4q2-4 5-2M7 7q1-1 2 0M15 5q2-5 4-2v4" />
                </Icon>
              </PreviewCheck>
              <OptionButton aria-label="Accept">
                <Icon viewBox="0 0 20 20"><path d="M2 10l6 6l10-11" fill="none" stroke="#8a9092" strokeWidth="3.500" /></Icon>
              </OptionButton>
              <PlainButton $w={11} aria-label="Cancel">
                <Icon viewBox="0 0 20 20"><path d="M12 4l10 12M22 4l-10 12" fill="none" stroke="#d3200f" strokeWidth="3" /></Icon>
              </PlainButton>
            </ControlLine>
            <SlideUps>
              <button>Placement</button>
              <button>Options</button>
              <button>Properties</button>
            </SlideUps>
          </DashboardBody>
        </Dashboard>

        <Workspace>
          <Navigator>
            <NavigatorMain>
              <Tabs>
                <Tab aria-label="Model tree">
                  <Icon viewBox="0 0 42 27" $w={42} $h={27}>
                    <path d="M.5 28v-24q0-3 3-3h28q3 0 5 4l10 23z" fill="#f8fbfc" stroke="#9fb2bd" />
                    <path
                      transform="translate(11 3)"
                      d="M3.500 1.500h4v4h-4zM3.500 8.500h4v4h-4zM3.500 15.500h4v4h-4zM11.500 8.500h4v4h-4zM8 10.500h4M5.500 6v2M5.500 13v2"
                      fill="none"
                      stroke="#222"
                    />
                  </Icon>
                </Tab>
                <Tab aria-label="Folder browser">
                  <Icon viewBox="0 0 42 27" $w={42} $h={27}>
                    <path d="M0 2q0-1 2-1h29q3 0 5 4l9 22h-35z" fill="#b5cddd" />
                    <g transform="translate(12 4)">{folder(0, 0)}{folder(3, 5)}{folder(6, 10)}</g>
                  </Icon>
                </Tab>
                <Tab aria-label="Favorites">
                  <Icon viewBox="0 0 42 27" $w={42} $h={27}>
                    <path d="M0 2q0-1 2-1h29q3 0 5 4l9 22h-35z" fill="#b5cddd" />
                    <g transform="translate(12 6)">
                      <path d="M.5 15.500v-13l1-1h5l1 2h9v12z" fill="#ffef5e" stroke="#7c6a1c" />
                      <path d="M8.500 6v7M5 9.500h7M6 7l5 5M11 7l-5 5" stroke="#1b2ca0" />
                    </g>
                  </Icon>
                </Tab>
              </Tabs>
              <Panel>
                <PanelHeader>
                  <h2>Model Tree</h2>
                  <HeaderMenu aria-label="Settings">
                    <Icon viewBox="0 0 20 20">
                      <path d="M1 5l4-3h6v3h-6l-3 3z" fill="#8e9ba2" stroke="#455" strokeWidth=".8" />
                      <path d="M7.500 5v14" stroke="#d26a24" strokeWidth="3.500" />
                      <path d="M7.500 5v6" stroke="#b8c4ca" strokeWidth="3" />
                      <path d="M14.500 7v12" stroke="#2a5cc0" strokeWidth="3" />
                      <path d="M12 1v4l2.500 3l3-3v-4M14.500 7v4" fill="none" stroke="#7b868c" strokeWidth="1.800" />
                    </Icon>
                    <Arrow />
                  </HeaderMenu>
                  <HeaderMenu aria-label="Show">
                    <Icon viewBox="0 0 20 20" fill="none">
                      <path d="M1.500 1.500h11l4 4v13h-15z" fill="#f6fafc" stroke="#64727a" />
                      <path d="M12.500 1.500v4h4" stroke="#64727a" />
                      <path d="M4.500 4v2M4.500 9v2M4.500 14v2" stroke="#222" strokeWidth="2" />
                      <path d="M7 5.500h4M7 10.500h8M7 15.500h8" stroke="#7d8c94" />
                    </Icon>
                    <Arrow />
                  </HeaderMenu>
                </PanelHeader>
                <TreeBox>
                  <ModelTree />
                  <ScrollLine>
                    <Icon viewBox="0 0 5 8" $w={5} $h={8}><path d="M5 0v8l-5-4z" fill="#5f8aa0" /></Icon>
                    <ScrollThumb><i /><i /><i /><i /></ScrollThumb>
                    <Icon viewBox="0 0 5 8" $w={5} $h={8}><path d="M0 0v8l5-4z" fill="#5f8aa0" /></Icon>
                  </ScrollLine>
                </TreeBox>
              </Panel>
            </NavigatorMain>
            <Sashes>
              <Sash aria-label="Expand navigator"><i /></Sash>
              <Sash $open aria-label="Collapse navigator"><i /></Sash>
            </Sashes>
          </Navigator>

          <Viewport>
            <Sketch />
            <MessageStrip />
          </Viewport>

          <SketchTools>
            {sideTools.map((item, i) => (
              item === 'grip'
                ? <SideGrip key={i} />
                : (
                  <ToolButton key={i} aria-label={item} $active={activeTools.includes(item)}>
                    <Icon viewBox="0 0 20 20" fill="none" stroke="#0f1f8e" strokeWidth="2">{sideIcons[item]}</Icon>
                  </ToolButton>
                )
            ))}
          </SketchTools>
        </Workspace>
      </Window>
    </>
  )
}

export default App
